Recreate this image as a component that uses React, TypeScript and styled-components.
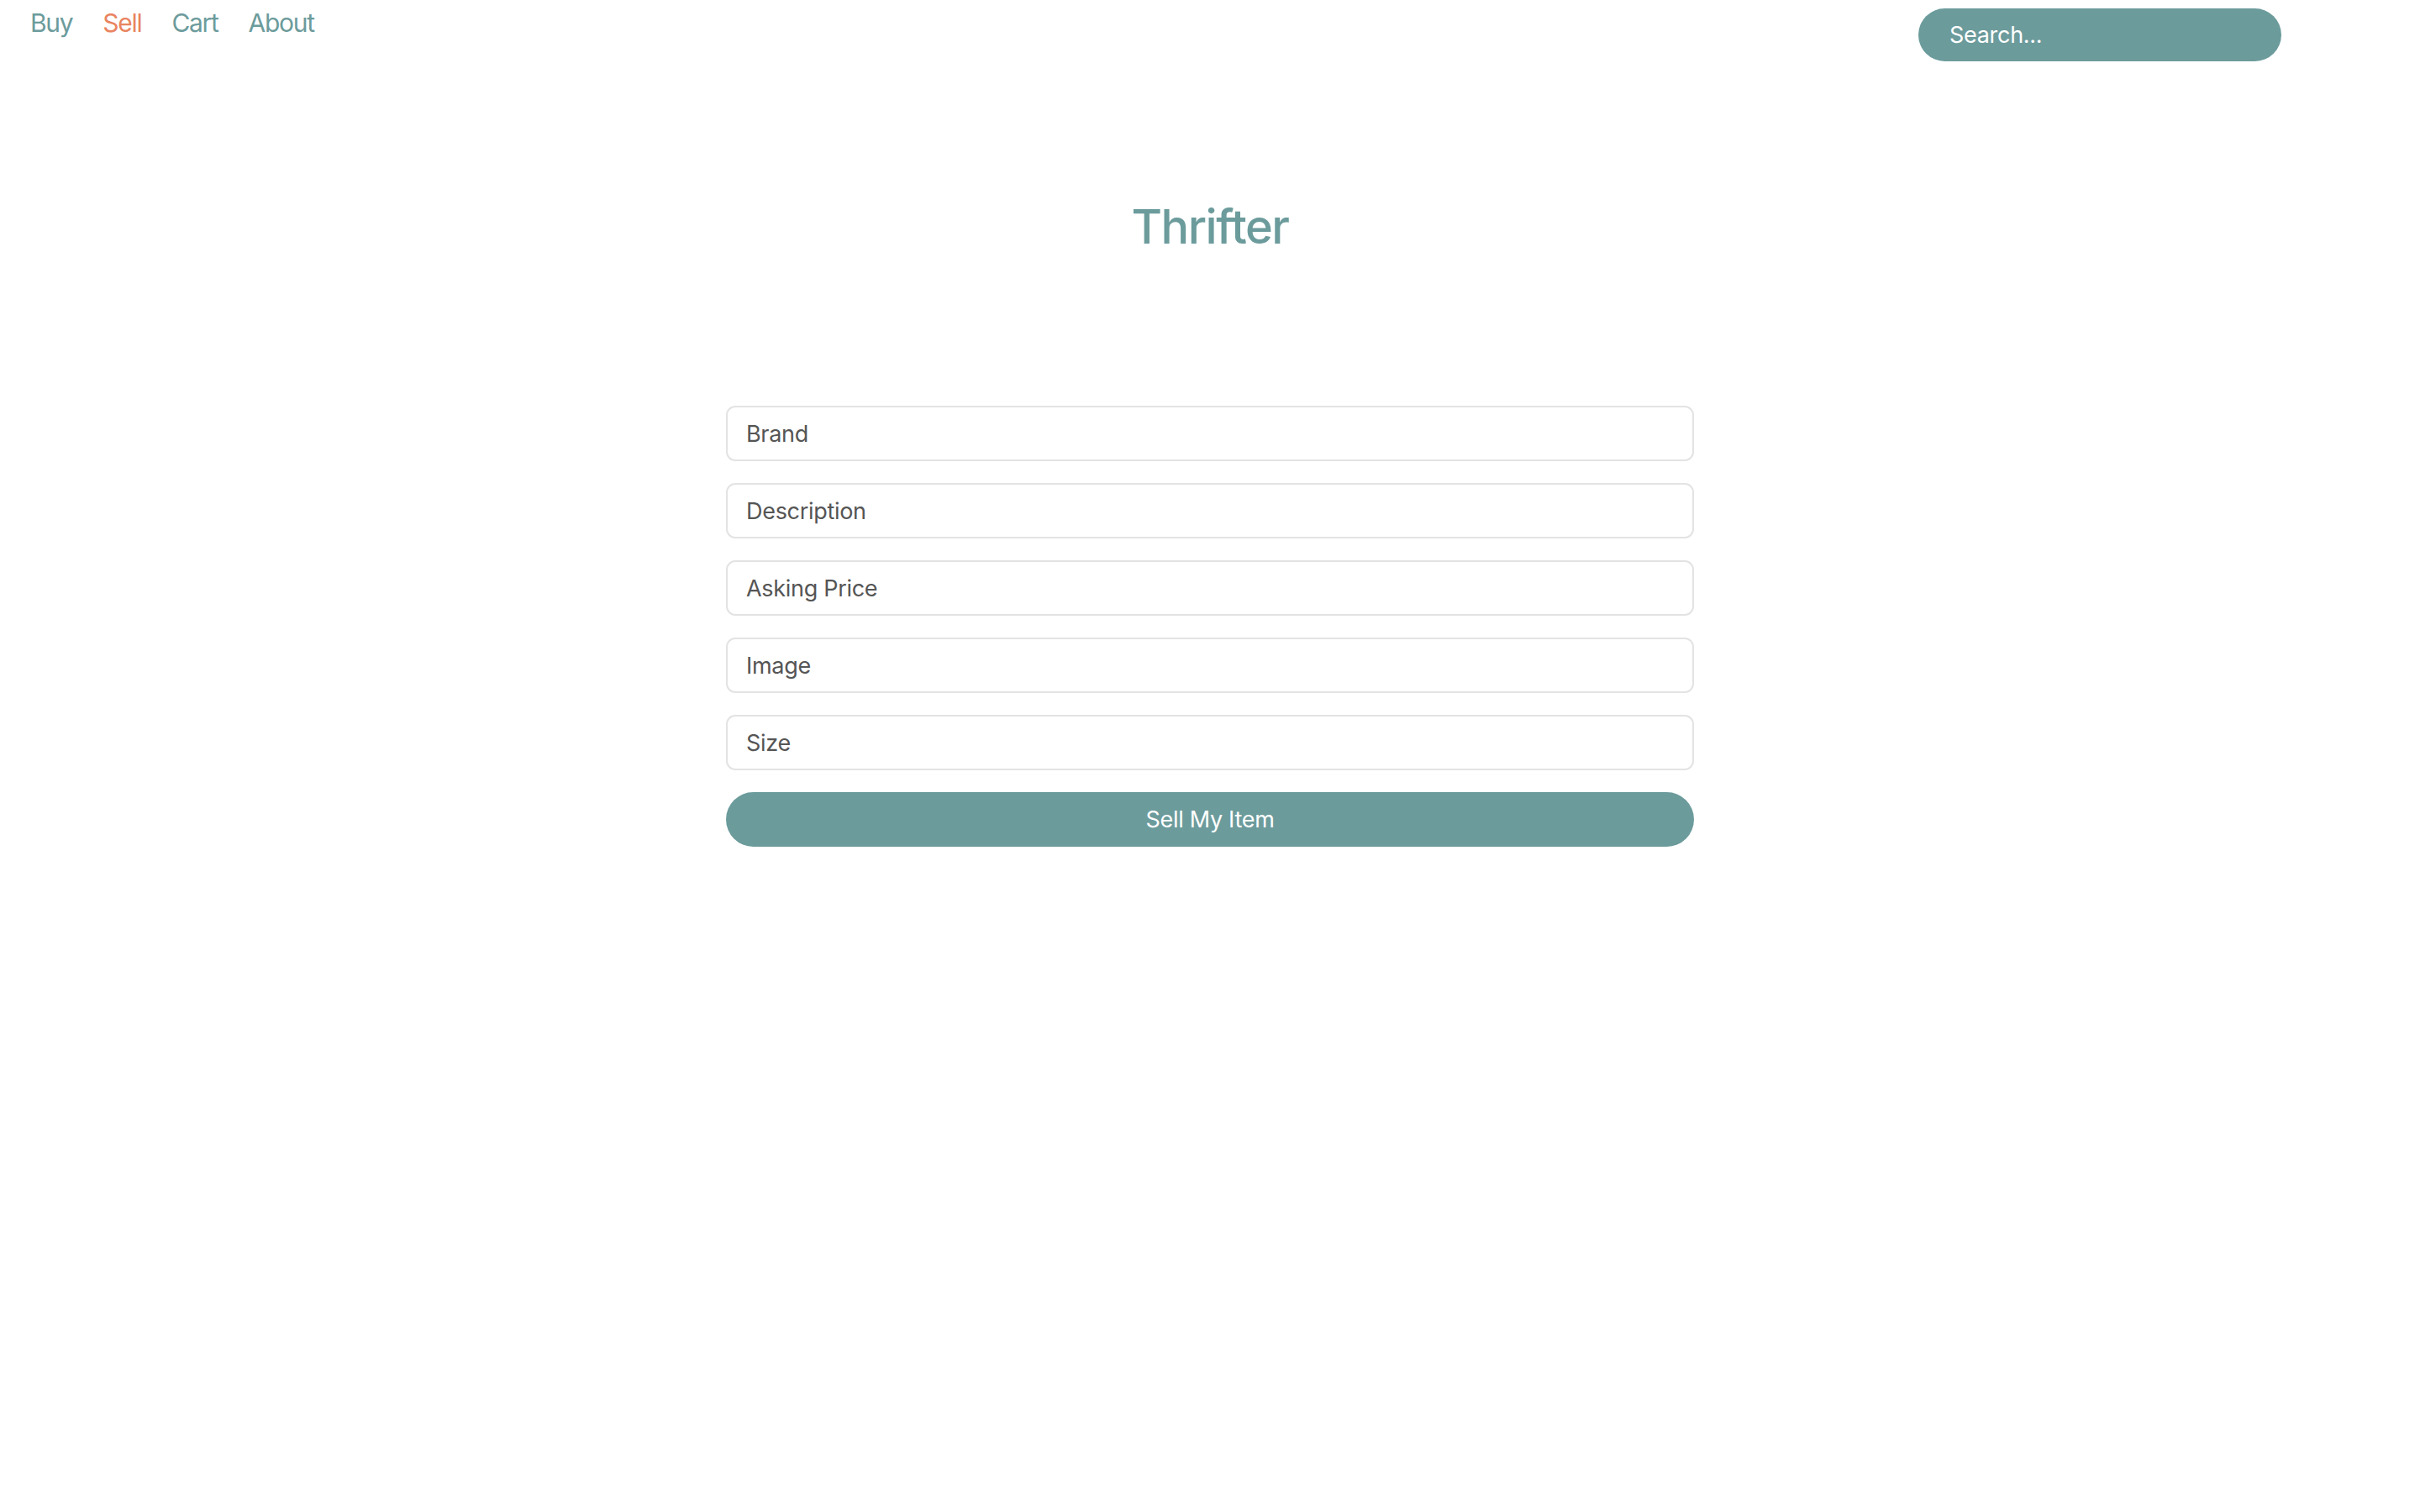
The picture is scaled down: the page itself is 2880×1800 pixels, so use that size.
import React from "react";
import styled, { createGlobalStyle } from "styled-components";

const TEAL = "#6c9b9c";
const ORANGE = "#e9845f";

const Global = createGlobalStyle`
  html, body { margin: 0; padding: 0; background: #ffffff; }
  body { font-family: Inter, "Noto Sans", "Liberation Sans", sans-serif; }
  * { box-sizing: border-box; }
`;

const Page = styled.div`
  min-height: 1800px;
  background: #fff;
`;

const Header = styled.header`
  display: flex;
  justify-content: space-between;
  align-items: flex-start;
  padding: 0 165px 0 36px;
  height: 73px;
`;

const Nav = styled.nav`
  display: flex;
  gap: 36px;
  padding-top: 8px;
`;

const NavLink = styled.a<{ $active?: boolean }>`
  font-size: 30px;
  line-height: 39px;
  font-weight: 400;
  letter-spacing: -1.3px;
  color: ${(p) => (p.$active ? ORANGE : TEAL)};
  text-decoration: none;
  cursor: pointer;
`;

const Search = styled.input`
  margin-top: 10px;
  width: 432px;
  height: 63px;
  border: none;
  outline: none;
  border-radius: 32px;
  background: ${TEAL};
  color: #fff;
  font-family: inherit;
  font-size: 27px;
  letter-spacing: -0.3px;
  padding: 0 0 0 37px;
  &::placeholder { color: #fff; opacity: 1; }
`;

const Main = styled.main`
  display: flex;
  flex-direction: column;
  align-items: center;
`;

const Title = styled.h1`
  margin: 162px 0 0;
  font-size: 56px;
  line-height: 70px;
  font-weight: 500;
  letter-spacing: -1.5px;
  color: ${TEAL};
`;

const Form = styled.form`
  margin-top: 178px;
  width: 1152px;
  display: flex;
  flex-direction: column;
  gap: 26px;
`;

const Field = styled.input`
  width: 100%;
  height: 66px;
  border: 2px solid #e3e3e3;
  border-radius: 11px;
  padding: 0 22px;
  font-family: inherit;
  font-size: 27px;
  letter-spacing: -0.3px;
  color: #555;
  outline: none;
  background: #fff;
  &::placeholder { color: #555; opacity: 1; }
`;

const Submit = styled.button`
  width: 100%;
  height: 65px;
  border: none;
  border-radius: 33px;
  background: ${TEAL};
  color: #fff;
  font-family: inherit;
  font-size: 27px;
  letter-spacing: -0.3px;
  font-weight: 400;
  cursor: pointer;
`;

const fields = ["Brand", "Description", "Asking Price", "Image", "Size"];

export default function App() {
  return (
    <Page>
      <Global />
      <Header>
        <Nav>
          <NavLink>Buy</NavLink>
          <NavLink $active>Sell</NavLink>
          <NavLink>Cart</NavLink>
          <NavLink>About</NavLink>
        </Nav>
        <Search placeholder="Search..." />
      </Header>
      <Main>
        <Title>Thrifter</Title>
        <Form onSubmit={(e) => e.preventDefault()}>
          {fields.map((f) => (
            <Field key={f} placeholder={f} />
          ))}
          <Submit type="submit">Sell My Item</Submit>
        </Form>
      </Main>
    </Page>
  );
}
